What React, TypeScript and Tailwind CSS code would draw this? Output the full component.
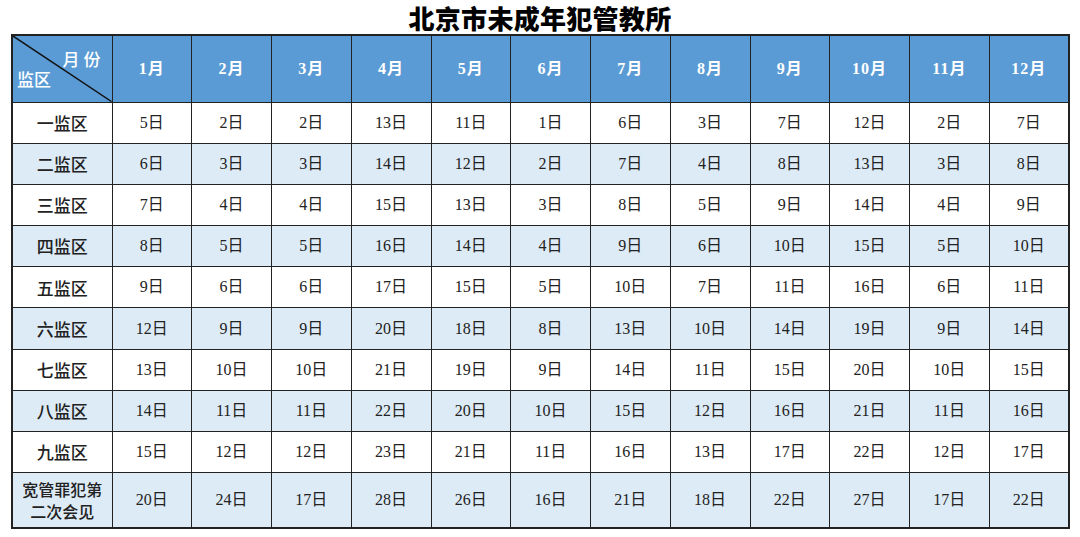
const months = ["1月", "2月", "3月", "4月", "5月", "6月", "7月", "8月", "9月", "10月", "11月", "12月"];

const rows: { label: string; days: number[] }[] = [
  { label: "一监区", days: [5, 2, 2, 13, 11, 1, 6, 3, 7, 12, 2, 7] },
  { label: "二监区", days: [6, 3, 3, 14, 12, 2, 7, 4, 8, 13, 3, 8] },
  { label: "三监区", days: [7, 4, 4, 15, 13, 3, 8, 5, 9, 14, 4, 9] },
  { label: "四监区", days: [8, 5, 5, 16, 14, 4, 9, 6, 10, 15, 5, 10] },
  { label: "五监区", days: [9, 6, 6, 17, 15, 5, 10, 7, 11, 16, 6, 11] },
  { label: "六监区", days: [12, 9, 9, 20, 18, 8, 13, 10, 14, 19, 9, 14] },
  { label: "七监区", days: [13, 10, 10, 21, 19, 9, 14, 11, 15, 20, 10, 15] },
  { label: "八监区", days: [14, 11, 11, 22, 20, 10, 15, 12, 16, 21, 11, 16] },
  { label: "九监区", days: [15, 12, 12, 23, 21, 11, 16, 13, 17, 22, 12, 17] },
];

const lastRow = [20, 24, 17, 28, 26, 16, 21, 18, 22, 27, 17, 22];

const font = "font-['Liberation_Serif','Noto_Sans_CJK_SC',serif]";

export default function App() {
  return (
    <div className={`w-[1080px] h-[537px] bg-white ${font} text-[#222]`}>
      <h1 className="h-[34px] flex items-center justify-center text-[26px] font-black font-['Noto_Sans_CJK_SC',sans-serif] tracking-[0.3px] text-black">
        北京市未成年犯管教所
      </h1>
      <table className="ml-[11px] w-[1059px] table-fixed border-collapse border-2 border-[#222]">
        <colgroup>
          <col className="w-[100px]" />
          {months.map((m) => (
            <col key={m} />
          ))}
        </colgroup>
        <thead>
          <tr className="h-[67px] bg-[#5b9bd5] text-white">
            <th className="relative border border-[#222] p-0 font-normal">
              <svg className="absolute inset-0 w-full h-full" preserveAspectRatio="none" viewBox="0 0 100 67">
                <line x1="0" y1="0" x2="100" y2="67" stroke="#111" strokeWidth="1.5" />
              </svg>
              <span className="absolute right-[7px] top-[10px] text-[17px] tracking-[4px] font-medium font-['Noto_Sans_CJK_SC',sans-serif]">月份</span>
              <span className="absolute left-[4px] bottom-[10px] text-[17px] font-medium font-['Noto_Sans_CJK_SC',sans-serif]">监区</span>
            </th>
            {months.map((m) => (
              <th key={m} className="border border-[#222] text-[16px] font-bold tracking-[1px]">
                {m}
              </th>
            ))}
          </tr>
        </thead>
        <tbody>
          {rows.map((r, i) => (
            <tr key={r.label} className={`h-[41.2px] ${i % 2 === 1 ? "bg-[#ddebf7]" : "bg-white"}`}>
              <td className="border border-[#222] text-center text-[17px] font-medium font-['Noto_Sans_CJK_SC',sans-serif]">
                {r.label}
              </td>
              {r.days.map((d, j) => (
                <td key={j} className="border border-[#222] text-center text-[16px]">
                  {d}日
                </td>
              ))}
            </tr>
          ))}
          <tr className="h-[55px] bg-[#ddebf7]">
            <td className="border border-[#222] text-center text-[16px] leading-[22px] font-medium font-['Noto_Sans_CJK_SC',sans-serif]">
              宽管罪犯第
              <br />
              二次会见
            </td>
            {lastRow.map((d, j) => (
              <td key={j} className="border border-[#222] text-center text-[16px]">
                {d}日
              </td>
            ))}
          </tr>
        </tbody>
      </table>
    </div>
  );
}
